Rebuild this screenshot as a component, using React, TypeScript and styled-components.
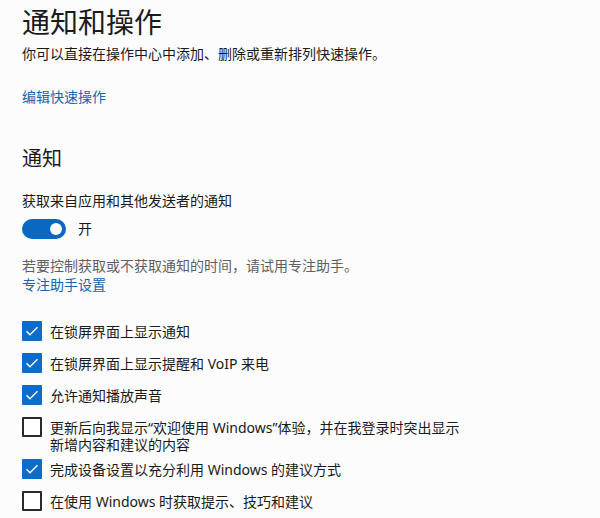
import * as React from "react";
import styled, { createGlobalStyle } from "styled-components";

const GlobalStyle = createGlobalStyle`
  html, body {
    margin: 0;
    padding: 0;
    background: #fcfcfd;
  }
  body {
    font-family: "Noto Sans", "Noto Sans CJK SC", sans-serif;
    color: #1a1a1a;
  }
`;

const Page = styled.div`
  width: 600px;
  height: 518px;
  overflow: hidden;
  box-sizing: border-box;
  padding: 4px 0 0 22px;
`;

const Title = styled.h1`
  margin: 0;
  font-size: 28px;
  line-height: 36px;
  font-weight: 400;
  color: #1b1b1b;
`;

const Text = styled.p<{ $muted?: boolean }>`
  margin: 0;
  font-size: 14px;
  line-height: 20px;
  color: ${(p) => (p.$muted ? "#606060" : "#1a1a1a")};
`;

const Desc = styled(Text)`
  margin-top: 4px;
`;

const LinkText = styled.a<{ $top?: number }>`
  display: block;
  margin-top: ${(p) => p.$top ?? 0}px;
  font-size: 14px;
  line-height: 19px;
  color: #1565b0;
  text-decoration: none;
  cursor: pointer;
`;

const SectionTitle = styled.h2`
  margin: 39px 0 0;
  font-size: 20px;
  line-height: 28px;
  font-weight: 400;
  color: #1b1b1b;
`;

const Label = styled(Text)`
  margin-top: 18px;
`;

const ToggleRow = styled.div`
  display: flex;
  align-items: center;
  gap: 12px;
  margin-top: 8px;
  font-size: 14px;
  line-height: 20px;
`;

const Track = styled.span<{ $on: boolean }>`
  width: 44px;
  height: 20px;
  border-radius: 10px;
  box-sizing: border-box;
  background: ${(p) => (p.$on ? "#0a67c2" : "transparent")};
  border: ${(p) => (p.$on ? "none" : "2px solid #333")};
  display: flex;
  align-items: center;
  justify-content: ${(p) => (p.$on ? "flex-end" : "flex-start")};
  padding: 0 4px;
`;

const Knob = styled.span`
  width: 12px;
  height: 12px;
  border-radius: 50%;
  background: #ffffff;
`;

const Hint = styled(Text)`
  margin-top: 17px;
  line-height: 19px;
`;

const CheckList = styled.div`
  display: flex;
  flex-direction: column;
  margin-top: 21px;
`;

// each checkbox control is at least 32px tall, the box sits 6px down
const Row = styled.label`
  display: flex;
  align-items: flex-start;
  gap: 8px;
  min-height: 32px;
`;

const Box = styled.span<{ $checked: boolean }>`
  flex: none;
  width: 20px;
  height: 20px;
  margin-top: 6px;
  box-sizing: border-box;
  border-radius: 1px;
  background: ${(p) => (p.$checked ? "#0b6cc9" : "#ffffff")};
  border: ${(p) => (p.$checked ? "none" : "2px solid #2a2a2a")};
  display: flex;
  align-items: center;
  justify-content: center;
`;

const RowText = styled.span`
  max-width: 420px;
  font-size: 14px;
  line-height: 17px;
  padding: 7.5px 0 0.5px;
  color: #1a1a1a;
`;

const checks = [
  { text: "在锁屏界面上显示通知", on: true },
  { text: "在锁屏界面上显示提醒和 VoIP 来电", on: true },
  { text: "允许通知播放声音", on: true },
  {
    text: "更新后向我显示“欢迎使用 Windows”体验，并在我登录时突出显示新增内容和建议的内容",
    on: false,
  },
  { text: "完成设备设置以充分利用 Windows 的建议方式", on: true },
  { text: "在使用 Windows 时获取提示、技巧和建议", on: false },
];

function Check({ checked }: { checked: boolean }) {
  return (
    <Box $checked={checked}>
      {checked && (
        <svg width="16" height="16" viewBox="0 0 16 16">
          <path
            d="M2.5 8.2 L6 11.7 L13.5 4.2"
            fill="none"
            stroke="#ffffff"
            strokeWidth="1.4"
          />
        </svg>
      )}
    </Box>
  );
}

export default function App() {
  return (
    <Page>
      <GlobalStyle />
      <Title>通知和操作</Title>
      <Desc>你可以直接在操作中心中添加、删除或重新排列快速操作。</Desc>
      <LinkText $top={23}>编辑快速操作</LinkText>

      <SectionTitle>通知</SectionTitle>
      <Label>获取来自应用和其他发送者的通知</Label>
      <ToggleRow>
        <Track $on>
          <Knob />
        </Track>
        <span>开</span>
      </ToggleRow>

      <Hint $muted>若要控制获取或不获取通知的时间，请试用专注助手。</Hint>
      <LinkText>专注助手设置</LinkText>

      <CheckList>
        {checks.map((c) => (
          <Row key={c.text}>
            <Check checked={c.on} />
            <RowText>{c.text}</RowText>
          </Row>
        ))}
      </CheckList>
    </Page>
  );
}
